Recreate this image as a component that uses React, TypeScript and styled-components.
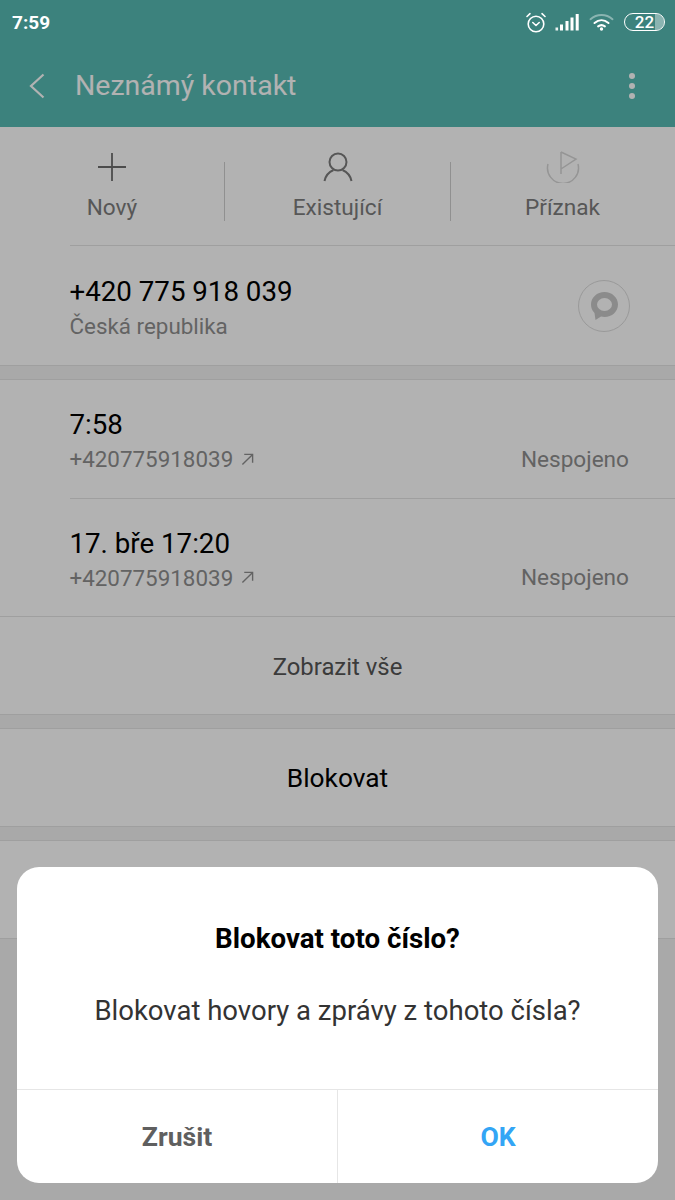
import React from 'react';
import styled, { createGlobalStyle } from 'styled-components';

const GlobalStyle = createGlobalStyle`
    html, body {
        margin: 0;
        padding: 0;
        background: #fff;
        font-family: Roboto, "Liberation Sans", sans-serif;
    }
`;

const Screen = styled.div`
    position: relative;
    width: 675px;
    height: 1200px;
    overflow: hidden;
    background: #f2f2f2;
`;

const Scrim = styled.div`
    position: absolute;
    inset: 0;
    background: rgba(0, 0, 0, 0.3);
`;

const Header = styled.header`
    background: #57bbb3;
    height: 127px;
    box-sizing: border-box;
`;

const StatusBar = styled.div`
    position: relative;
    z-index: 2;
    height: 44px;
    display: flex;
    align-items: center;
    justify-content: space-between;
    padding: 0 10px 0 12px;
    color: #fff;
`;

const Clock = styled.span`
    font-size: 19px;
    font-weight: 700;
`;

const StatusIcons = styled.div`
    display: flex;
    align-items: center;
    gap: 9px;
`;

const Battery = styled.div`
    position: relative;
    width: 41px;
    height: 18px;
    margin-left: 1px;
    box-sizing: border-box;
    border: 1.5px solid #fff;
    border-radius: 9px;
    display: flex;
    align-items: center;
    justify-content: center;
    font-size: 17px;
    font-weight: 500;
    line-height: 1;
    &::after {
        content: '';
        position: absolute;
        top: 0;
        bottom: 0;
        right: 0;
        width: 9px;
        border-radius: 0 8px 8px 0;
        background: rgba(255, 255, 255, 0.4);
    }
`;

const TitleBar = styled.div`
    height: 83px;
    display: flex;
    align-items: center;
    padding: 0 38px 2px 29px;
`;

const Title = styled.h1`
    flex: 1;
    margin: 0 0 0 30px;
    font-size: 28.5px;
    font-weight: 400;
    color: #fff;
`;

const Card = styled.section<{ $flushTop?: boolean }>`
    background: #fff;
    border-top: ${p => p.$flushTop ? 'none' : '1px solid #e4e4e4'};
    border-bottom: 1px solid #e4e4e4;
`;

const Actions = styled.div`
    height: 118px;
    display: grid;
    grid-template-columns: 225px 226px 224px;
    background: #fff;
`;

const Action = styled.div<{ $divided?: boolean }>`
    position: relative;
    display: flex;
    flex-direction: column;
    align-items: center;
    padding: 24px 1px 0 0;
    font-size: 22.6px;
    color: #7d7d7d;
    ${p => p.$divided ? `
        &::after {
            content: '';
            position: absolute;
            right: 0;
            top: 35px;
            height: 59px;
            width: 1px;
            background: #cfcfcf;
        }
    ` : ''}
`;

const ActionIcon = styled.div`
    height: 32px;
    display: flex;
    align-items: center;
    justify-content: center;
`;

const ActionLabel = styled.span`
    margin-top: 12px;
    line-height: 26px;
`;

const Row = styled.div<{ $height: number; $divided?: boolean }>`
    height: ${p => p.$height}px;
    box-sizing: border-box;
    margin-left: 70px;
    padding-right: 46px;
    padding-top: 2px;
    display: flex;
    align-items: center;
    justify-content: space-between;
    ${p => p.$divided ? 'border-top: 1px solid #e4e4e4;' : ''}
`;

const RowText = styled.div`
    display: flex;
    flex-direction: column;
    gap: 4px;
    margin-left: -0.5px;
`;

const Primary = styled.div`
    font-size: 27.7px;
    line-height: 34px;
    color: #000;
`;

const Secondary = styled.div`
    display: flex;
    align-items: center;
    gap: 8px;
    font-size: 22.4px;
    line-height: 26px;
    color: #8f8f8f;
`;

const Status = styled.span`
    align-self: flex-end;
    margin-bottom: 25px;
    font-size: 22.6px;
    line-height: 26px;
    color: #8f8f8f;
`;

const ChatButton = styled.div`
    width: 50px;
    height: 50px;
    margin-right: -1px;
    margin-bottom: 2px;
    border: 1px solid #dcdcdc;
    border-radius: 50%;
    display: flex;
    align-items: center;
    justify-content: center;
`;

const Gap = styled.div`
    height: 13px;
`;

const ActionRow = styled.div<{ $dark?: boolean }>`
    height: 97px;
    padding-top: ${p => p.$dark ? 0 : 2}px;
    box-sizing: border-box;
    display: flex;
    align-items: center;
    justify-content: center;
    font-size: ${p => p.$dark ? 26.3 : 23.9}px;
    color: ${p => p.$dark ? '#000' : '#555'};
    background: #fff;
`;

const RowLine = styled.div`
    height: 1px;
    background: #e4e4e4;
`;

const Dialog = styled.div`
    position: absolute;
    z-index: 3;
    left: 17px;
    top: 867px;
    width: 641px;
    height: 316px;
    background: #fff;
    border-radius: 22px;
    display: flex;
    flex-direction: column;
    overflow: hidden;
`;

const DialogBody = styled.div`
    flex: 1;
    display: flex;
    flex-direction: column;
    align-items: center;
    padding-top: 57px;
    gap: 41px;
`;

const DialogTitle = styled.h2`
    margin: 0;
    font-size: 27.7px;
    line-height: 30px;
    font-weight: 700;
    color: #000;
`;

const DialogMessage = styled.p`
    margin: 0;
    font-size: 27.5px;
    line-height: 32px;
    color: #333;
`;

const DialogButtons = styled.div`
    height: 94px;
    box-sizing: border-box;
    display: grid;
    grid-template-columns: 320px 1fr;
    border-top: 1px solid #e6e6e6;
`;

const DialogButton = styled.div<{ $accent?: boolean }>`
    display: flex;
    align-items: center;
    justify-content: center;
    font-size: 26.6px;
    font-weight: 700;
    color: ${p => p.$accent ? '#33a5f5' : '#5f5f5f'};
    & + & {
        border-left: 1px solid #e6e6e6;
    }
`;

const AlarmIcon = () => (
    <svg width="20" height="21" viewBox="0 0 20 21" fill="none" stroke="#fff" strokeWidth="1.6" strokeLinecap="round" strokeLinejoin="round">
        <circle cx="10" cy="12" r="7.800" />
        <path d="M6.800 10.500l3.200 3 3.200-3" />
        <path d="M1 4.500l3-2.800M19 4.500l-3-2.800" />
    </svg>
);

const SignalIcon = () => (
    <svg width="25" height="18" viewBox="0 0 25 18" fill="#fff">
        <rect x="0.500" y="14.500" width="2.600" height="3" opacity="0.9" />
        <rect x="5" y="11.500" width="3" height="6" />
        <rect x="10.500" y="8" width="3" height="9.500" />
        <rect x="15.500" y="4.500" width="3" height="13" />
        <rect x="20.700" y="1" width="3" height="16.500" />
    </svg>
);

const WifiIcon = () => (
    <svg width="25" height="18" viewBox="0 0 24 18" fill="none" strokeLinecap="round">
        <path d="M1 6.200C7.400 .6 16.600 .6 23 6.200" stroke="#fff" strokeOpacity="0.4" strokeWidth="2" />
        <path d="M5 10C9.300 6.400 14.700 6.400 19 10" stroke="#fff" strokeWidth="2" />
        <path d="M8.600 13.400c2.100-1.600 4.700-1.600 6.800 0" stroke="#fff" strokeWidth="2" />
        <circle cx="12" cy="16" r="1.700" fill="#fff" />
    </svg>
);

const BackIcon = () => (
    <svg width="16" height="26" viewBox="0 0 16 26" fill="none" stroke="#fff" strokeWidth="2.200">
        <path d="M14.500 1.500L2 13l12.500 11.500" />
    </svg>
);

const MoreIcon = () => (
    <svg width="10" height="30" viewBox="0 0 10 30" fill="#fff">
        <circle cx="5" cy="5" r="3" />
        <circle cx="5" cy="15" r="3" />
        <circle cx="5" cy="25" r="3" />
    </svg>
);

const PlusIcon = () => (
    <svg width="28" height="28" viewBox="0 0 28 28" stroke="#6e6e6e" strokeWidth="1.800">
        <path d="M14 0v28M0 14h28" />
    </svg>
);

const PersonIcon = () => (
    <svg width="30" height="30" viewBox="0 0 30 30" fill="none" stroke="#7c7c7c" strokeWidth="2">
        <circle cx="15" cy="10" r="8.500" />
        <path d="M1.500 29C2.500 24 6 20 10.500 18M28.500 29C27.500 24 24 20 19.500 18" />
    </svg>
);

const FlagIcon = () => (
    <svg width="34" height="32" viewBox="0 0 34 32" fill="none" stroke="#d6d6d6" strokeWidth="1.500">
        <path d="M2 13A15.500 15.500 0 1 0 32 13" />
        <path d="M15 1v22M15 1l15 7-15 10" />
    </svg>
);

const ChatIcon = () => (
    <svg width="30" height="30" viewBox="0 0 30 30">
        <path fill="#c8c8c8" d="M15.500 1C23 1 29 6.500 29 13.500S23 26 15.500 26c-1.200 0-2.400-.2-3.500-.5L6.500 29 5.500 22C3 19.500 2 16.500 2 13.500 2 6.500 8 1 15.500 1z" />
        <ellipse cx="15.500" cy="13.500" rx="7.500" ry="6.500" fill="#fff" />
    </svg>
);

const CallArrow = () => (
    <svg width="13" height="13" viewBox="0 0 14 14" fill="none" stroke="#8f8f8f" strokeWidth="1.500">
        <path d="M1.500 12.500L12.500 1.500M3.500 1.500h9v9" />
    </svg>
);

const calls = [
    { time: '7:58', number: '+420775918039' },
    { time: '17. bře 17:20', number: '+420775918039' },
];

export default function App() {
    return (
        <Screen>
            <GlobalStyle />
            <Header>
                <StatusBar>
                    <Clock>7:59</Clock>
                    <StatusIcons>
                        <AlarmIcon />
                        <SignalIcon />
                        <WifiIcon />
                        <Battery>22</Battery>
                    </StatusIcons>
                </StatusBar>
                <TitleBar>
                    <BackIcon />
                    <Title>Neznámý kontakt</Title>
                    <MoreIcon />
                </TitleBar>
            </Header>

            <Actions>
                <Action $divided><ActionIcon><PlusIcon /></ActionIcon><ActionLabel>Nový</ActionLabel></Action>
                <Action $divided><ActionIcon><PersonIcon /></ActionIcon><ActionLabel>Existující</ActionLabel></Action>
                <Action><ActionIcon><FlagIcon /></ActionIcon><ActionLabel>Příznak</ActionLabel></Action>
            </Actions>
            <Card $flushTop>
                <Row $height={120} $divided>
                    <RowText>
                        <Primary>+420 775 918 039</Primary>
                        <Secondary>Česká republika</Secondary>
                    </RowText>
                    <ChatButton><ChatIcon /></ChatButton>
                </Row>
            </Card>
            <Gap />
            <Card>
                {calls.map((call, i) => (
                    <Row key={call.time} $height={118} $divided={i > 0}>
                        <RowText>
                            <Primary>{call.time}</Primary>
                            <Secondary>{call.number} <CallArrow /></Secondary>
                        </RowText>
                        <Status>Nespojeno</Status>
                    </Row>
                ))}
                <RowLine />
                <ActionRow>Zobrazit vše</ActionRow>
            </Card>
            <Gap />
            <Card><ActionRow $dark>Blokovat</ActionRow></Card>
            <Gap />
            <Card><ActionRow /></Card>

            <Scrim />

            <Dialog>
                <DialogBody>
                    <DialogTitle>Blokovat toto číslo?</DialogTitle>
                    <DialogMessage>Blokovat hovory a zprávy z tohoto čísla?</DialogMessage>
                </DialogBody>
                <DialogButtons>
                    <DialogButton>Zrušit</DialogButton>
                    <DialogButton $accent>OK</DialogButton>
                </DialogButtons>
            </Dialog>
        </Screen>
    );
}
